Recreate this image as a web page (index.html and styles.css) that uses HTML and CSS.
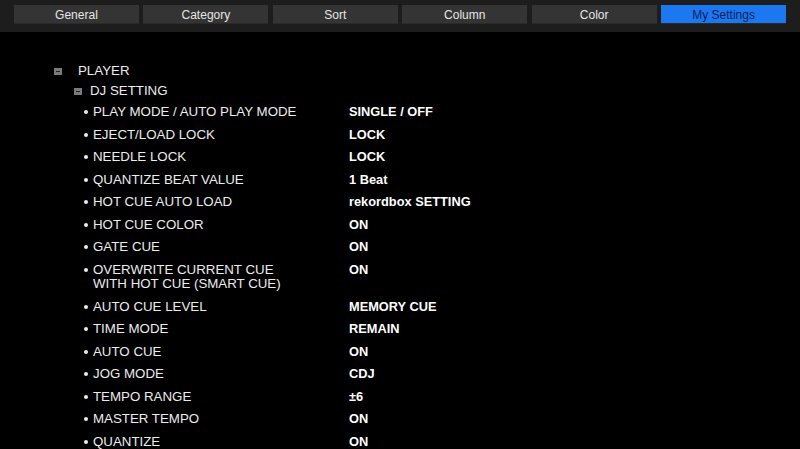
FILE: index.html
```html
<!DOCTYPE html>
<html>
<head>
<meta charset="utf-8">
<link rel="stylesheet" href="styles.css">
</head>
<body>
<div class="topbar">
  <div class="tab">General</div>
  <div class="tab">Category</div>
  <div class="tab">Sort</div>
  <div class="tab">Column</div>
  <div class="tab">Color</div>
  <div class="tab active">My Settings</div>
</div>
<div class="content">
  <div class="node lvl1"><span class="box"></span><span class="title">PLAYER</span></div>
  <div class="node lvl2"><span class="box"></span><span class="title">DJ SETTING</span></div>
  <ul class="list">
    <li class="row"><span class="label">PLAY MODE / AUTO PLAY MODE</span><span class="value">SINGLE / OFF</span></li>
    <li class="row"><span class="label">EJECT/LOAD LOCK</span><span class="value">LOCK</span></li>
    <li class="row"><span class="label">NEEDLE LOCK</span><span class="value">LOCK</span></li>
    <li class="row"><span class="label">QUANTIZE BEAT VALUE</span><span class="value">1 Beat</span></li>
    <li class="row"><span class="label">HOT CUE AUTO LOAD</span><span class="value">rekordbox SETTING</span></li>
    <li class="row"><span class="label">HOT CUE COLOR</span><span class="value">ON</span></li>
    <li class="row"><span class="label">GATE CUE</span><span class="value">ON</span></li>
    <li class="row"><span class="label">OVERWRITE CURRENT CUE<br>WITH HOT CUE (SMART CUE)</span><span class="value">ON</span></li>
    <li class="row"><span class="label">AUTO CUE LEVEL</span><span class="value">MEMORY CUE</span></li>
    <li class="row"><span class="label">TIME MODE</span><span class="value">REMAIN</span></li>
    <li class="row"><span class="label">AUTO CUE</span><span class="value">ON</span></li>
    <li class="row"><span class="label">JOG MODE</span><span class="value">CDJ</span></li>
    <li class="row"><span class="label">TEMPO RANGE</span><span class="value">±6</span></li>
    <li class="row"><span class="label">MASTER TEMPO</span><span class="value">ON</span></li>
    <li class="row"><span class="label">QUANTIZE</span><span class="value">ON</span></li>
  </ul>
</div>
</body>
</html>
```
FILE: styles.css
```css
html, body {
  margin: 0;
  padding: 0;
  background: #000;
  height: 449px;
  overflow: hidden;
  font-family: "Liberation Sans", Arial, sans-serif;
}
.topbar {
  display: flex;
  gap: 4.5px;
  height: 32px;
  box-sizing: border-box;
  padding: 5px 14px 0 14px;
  background: #1d1d1d;
}
.tab {
  flex: 1;
  height: 19px;
  box-sizing: border-box;
  padding-top: 1px;
  background: #343434;
  border-bottom: 1px solid #2a2a2a;
  color: #e6e6e6;
  font-size: 12px;
  line-height: 18px;
  text-align: center;
}
.tab.active {
  background: #1c78f0;
  color: #0b1e5c;
}
.content {
  padding-top: 32px;
  color: #ececec;
  font-size: 13.3px;
}
.node {
  display: flex;
  align-items: center;
  height: 14px;
  line-height: 14px;
}
.lvl1 {
  padding-left: 54px;
  margin-bottom: 6px;
}
.lvl2 {
  padding-left: 74px;
  margin-bottom: 7px;
}
.box {
  width: 8px;
  height: 7px;
  background: #7a7a7a;
  position: relative;
  margin-right: 16px;
}
.lvl2 .box { margin-right: 8px; }
.box::after {
  content: "";
  position: absolute;
  left: 2px;
  right: 2px;
  top: 3px;
  height: 1px;
  background: #222;
}
.list {
  list-style: none;
  margin: 0;
  padding: 0 0 0 83px;
}
.row {
  display: flex;
  line-height: 14px;
  margin-bottom: 8.57px;
}
.label {
  width: 266px;
  flex: none;
  padding-left: 10px;
  position: relative;
  box-sizing: border-box;
}
.label::before {
  content: "";
  position: absolute;
  left: 1px;
  top: 5px;
  width: 4px;
  height: 4px;
  border-radius: 50%;
  background: #ececec;
}
.value {
  font-weight: bold;
  font-size: 12.8px;
  color: #fff;
}
```
